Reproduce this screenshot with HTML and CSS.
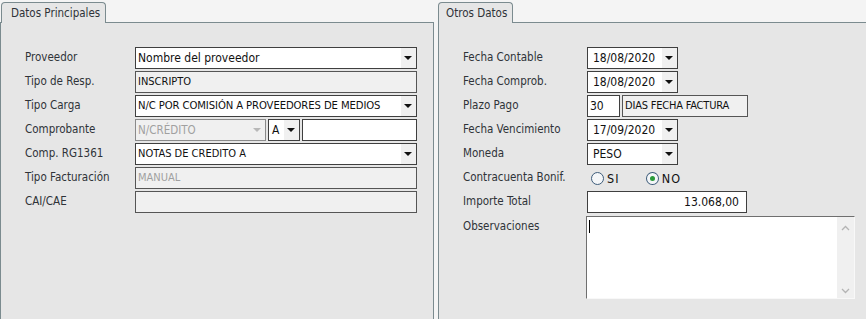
FILE: index.html
```html
<!DOCTYPE html>
<html lang="es">
<head>
  <meta charset="UTF-8" />
  <title>Comprobante</title>
  <link rel="stylesheet" href="styles.css">
</head>
<body>
  <div class="tabs">
    <section class="panel left">
      <div class="tab">Datos Principales</div>
      <div class="pane">
        <div class="form">
          <label class="lbl">Proveedor</label>
          <div class="field select big">Nombre del proveedor<span class="arrow"></span></div>

          <label class="lbl">Tipo de Resp.</label>
          <div class="field ro">INSCRIPTO</div>

          <label class="lbl">Tipo Carga</label>
          <div class="field select caps">N/C POR COMISIÓN A PROVEEDORES DE MEDIOS<span class="arrow"></span></div>

          <label class="lbl">Comprobante</label>
          <div class="split">
            <div class="field select off comp">N/CRÉDITO<span class="arrow"></span></div>
            <div class="field select letra">A<span class="arrow"></span></div>
            <div class="field nro"></div>
          </div>

          <label class="lbl">Comp. RG1361</label>
          <div class="field select">NOTAS DE CREDITO A<span class="arrow"></span></div>

          <label class="lbl">Tipo Facturación</label>
          <div class="field ro dim">MANUAL</div>

          <label class="lbl">CAI/CAE</label>
          <div class="field ro"></div>
        </div>
      </div>
    </section>

    <section class="panel right">
      <div class="tab">Otros Datos</div>
      <div class="pane">
        <div class="form wide">
          <label class="lbl">Fecha Contable</label>
          <div class="field select date">18/08/2020<span class="arrow"></span></div>

          <label class="lbl">Fecha Comprob.</label>
          <div class="field select date">18/08/2020<span class="arrow"></span></div>

          <label class="lbl">Plazo Pago</label>
          <div class="split">
            <div class="field dias">30</div>
            <div class="field ro desc">DIAS FECHA FACTURA</div>
          </div>

          <label class="lbl">Fecha Vencimiento</label>
          <div class="field select date">17/09/2020<span class="arrow"></span></div>

          <label class="lbl">Moneda</label>
          <div class="field select date">PESO<span class="arrow"></span></div>

          <label class="lbl">Contracuenta Bonif.</label>
          <div class="radios">
            <span class="radio"><span class="dot"></span>SI</span>
            <span class="radio on"><span class="dot"></span>NO</span>
          </div>

          <label class="lbl">Importe Total</label>
          <div class="field amount">13.068,00</div>

          <label class="lbl obs-lbl">Observaciones</label>
          <div class="memo">
            <span class="caret"></span>
            <div class="scroll">
              <svg width="9" height="6" viewBox="0 0 9 6"><path d="M1 5 L4.5 1.5 L8 5" fill="none" stroke="#b4b4b4" stroke-width="1.3"/></svg>
              <svg width="9" height="6" viewBox="0 0 9 6"><path d="M1 1 L4.5 4.5 L8 1" fill="none" stroke="#b4b4b4" stroke-width="1.3"/></svg>
            </div>
          </div>
        </div>
      </div>
    </section>
  </div>
</body>
</html>
```

FILE: styles.css
```css
* { box-sizing: border-box; }

body {
  margin: 0;
  background: #f4f4f4;
  font-family: "DejaVu Sans Condensed", "DejaVu Sans", sans-serif;
  font-size: 11px;
  color: #2f3338;
  overflow: hidden;
  height: 319px;
}

.tabs {
  display: flex;
  gap: 4px;
  height: 319px;
}

.panel {
  display: flex;
  flex-direction: column;
}

.panel.left { width: 434px; }
.panel.right { flex: 1; margin-right: -2px; }

.tab {
  position: relative;
  z-index: 1;
  align-self: flex-start;
  height: 21px;
  margin: 2px 0 -1px 1px;
  padding: 3px 0 0 9px;
  background: #e6e6e6;
  border: 1px solid #7b8b8f;
  border-bottom: none;
  border-radius: 4px 4px 0 0;
  color: #2f3338;
  font-size: 11.5px;
  white-space: nowrap;
}

.panel.left .tab { width: 105px; }
.panel.right .tab { margin-left: 0; width: 75px; padding-left: 7px; }

.pane {
  flex: 1;
  background: #e6e6e6;
  border: 1px solid #7b8b8f;
  border-bottom: none;
  padding: 24px 0 0 24px;
}

.form {
  display: grid;
  grid-template-columns: 110px 282px;
  row-gap: 2px;
  align-items: start;
}

.form.wide {
  grid-template-columns: 124px 270px;
}

.lbl {
  height: 22px;
  line-height: 20px;
  font-size: 11.5px;
  color: #2f3338;
}

.field {
  position: relative;
  height: 22px;
  line-height: 20px;
  border: 1px solid #3f3f3f;
  background: #fff;
  padding: 0 2px 0 2px;
  color: #111;
  font-size: 11px;
  white-space: nowrap;
  overflow: hidden;
}

.field.ro {
  background: #f0f0f0;
  border-color: #555;
}

.field.dim, .field.off { color: #a0a0a0; }
.field.off { background: #f0f0f0; border-color: #8a8a8a; }

.field.big { font-size: 12px; }
.field.caps { font-size: 11.2px; letter-spacing: -0.1px; }

.select { padding-right: 18px; }

.arrow {
  position: absolute;
  top: 0;
  right: 0;
  width: 15px;
  height: 20px;
  background: #f0f0f0;
}

.arrow::after {
  content: "";
  position: absolute;
  left: 3px;
  top: 8px;
  border-left: 4px solid transparent;
  border-right: 4px solid transparent;
  border-top: 4px solid #111;
}

.off .arrow::after { border-top-color: #b8b8b8; }

.split {
  display: flex;
  gap: 2px;
}

.comp { width: 131px; font-size: 11.5px; }
.letra { width: 32px; font-size: 12px; padding-left: 3px; }
.nro { width: 115px; }

.date {
  width: 91px;
  font-size: 12px;
  padding-left: 5px;
}

.dias { width: 33px; font-size: 12px; }
.desc { width: 126px; letter-spacing: -0.2px; }

.amount {
  width: 160px;
  text-align: right;
  font-size: 12px;
  padding-right: 7px;
}

.radios {
  display: flex;
  gap: 20px;
  height: 22px;
  align-items: center;
  padding-left: 4px;
  font-size: 12.5px;
  color: #111;
}

.radio {
  display: flex;
  align-items: center;
  gap: 3px;
  width: 35px;
  letter-spacing: 1px;
}

.dot {
  width: 13px;
  height: 13px;
  border: 1px solid #3d5c7a;
  border-radius: 50%;
  background: #f4f6f8;
  display: flex;
  align-items: center;
  justify-content: center;
}

.radio.on .dot::after {
  content: "";
  width: 5px;
  height: 5px;
  border-radius: 50%;
  background: #2a9a3a;
}

.obs-lbl { margin-top: 1px; }

.memo {
  position: relative;
  width: 269px;
  height: 83px;
  margin-top: 1px;
  margin-left: -1px;
  background: #fff;
  border: 1px solid;
  border-color: #6f6f6f #f8f8f8 #f8f8f8 #6f6f6f;
  display: flex;
  justify-content: flex-end;
}

.caret {
  position: absolute;
  left: 2px;
  top: 3px;
  width: 1px;
  height: 13px;
  background: #000;
}

.scroll {
  width: 17px;
  background: #f0f0f0;
  display: flex;
  flex-direction: column;
  justify-content: space-between;
  align-items: center;
  padding: 8px 0 4px;
}
```
